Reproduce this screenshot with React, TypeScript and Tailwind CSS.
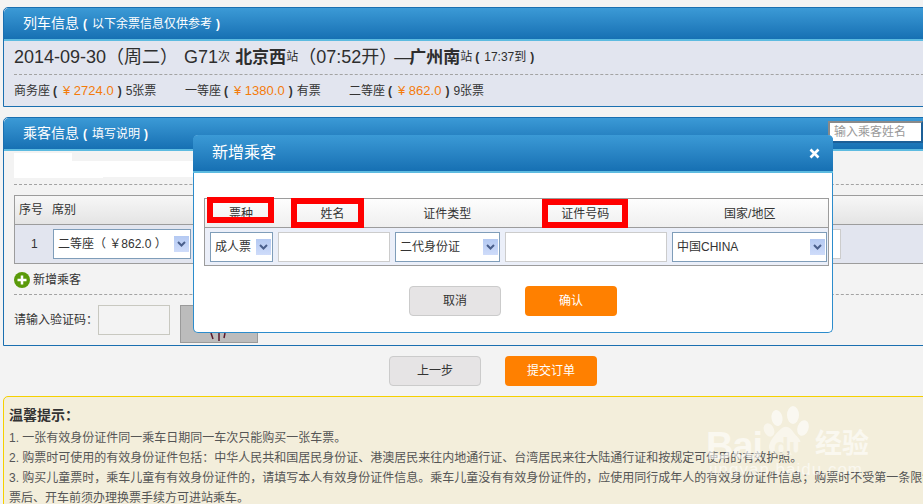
import React from "react"

const font = "[font-family:'Liberation_Sans','Noto_Sans_CJK_SC',sans-serif]"

function PanelHeader({title, note, children}: {title: string; note: string; children?: React.ReactNode}) {
    return (
        <div className="flex h-[33px] shrink-0 justify-between rounded-t-[5px] border-b-2 border-[#5dbbe0] bg-gradient-to-b from-[#3b9ad6] to-[#1670b3] pl-[19px] text-white">
            <div className="flex h-[31px] items-center">
                <span className="text-[14px]">{title}</span>
                <span className="ml-[4px] text-[12px] font-bold">(</span>
                <span className="ml-[5px] text-[12px]">{note}</span>
                <span className="ml-[4px] text-[12px] font-bold">)</span>
            </div>
            {children}
        </div>
    )
}

function Arrow() {
    return (
        <span className="flex h-[16px] w-[15px] items-center justify-center bg-gradient-to-b from-[#b4c9f2] to-[#cfdcfa]">
            <svg width="9" height="6" viewBox="0 0 9 6">
                <path d="M1 1l3.5 3.5L8 1" fill="none" stroke="#4a5f8c" strokeWidth="2"/>
            </svg>
        </span>
    )
}

function FakeSelect({label, width}: {label: string; width: string}) {
    return (
        <div className={`flex h-[30px] ${width} shrink-0 items-center justify-between border border-[#7f9db9] bg-white pl-[4px] pr-[1px] text-[12px] text-[#333]`}>
            <span className="whitespace-nowrap">{label}</span>
            <Arrow/>
        </div>
    )
}

function Dash({className}: {className?: string}) {
    return <div className={`border-t border-dashed border-[#a3a3a3] ${className ?? ""}`}/>
}

function Btn({label, primary}: {label: string; primary?: boolean}) {
    return (
        <button
            className={
                primary
                    ? "h-[30px] w-[92px] rounded-[4px] bg-[#ff8000] text-[12px] text-white"
                    : "h-[30px] w-[92px] rounded-[4px] border border-[#cbcbcb] bg-[#e6e4e5] text-[12px] text-[#333]"
            }
        >
            {label}
        </button>
    )
}

function Ticket({name, price, left, width}: {name: string; price: string; left: string; width: string}) {
    return (
        <span className={`${width} flex shrink-0 items-center whitespace-nowrap`}>
            <span>{name}</span>
            <span className="ml-[3px] font-bold">(</span>
            <span className="ml-[6px] text-[13px] text-[#f47b0b]">¥ {price}</span>
            <span className="ml-[4px] font-bold">)</span>
            <span className="ml-[4px]">{left}</span>
        </span>
    )
}

function RedBox({className}: {className: string}) {
    return <div className={`absolute border-[6px] border-[#ff0000] ${className}`}/>
}

function Watermark() {
    return (
        <div className="pointer-events-none absolute left-[706px] top-[404px] h-[80px] w-[170px] text-white/60">
            <svg className="absolute left-[54px] top-0" width="60" height="56" viewBox="0 0 60 56" fill="currentColor">
                <ellipse cx="17" cy="14" rx="5.5" ry="8" transform="rotate(-10 17 14)"/>
                <ellipse cx="33" cy="11" rx="6" ry="9"/>
                <ellipse cx="9" cy="26" rx="5" ry="7" transform="rotate(-25 9 26)" opacity="0.8"/>
                <ellipse cx="43" cy="24" rx="5.5" ry="8" transform="rotate(20 43 24)"/>
                <path d="M22 24c5-3 9 0 12 5 3 4 7 6 7 12 0 7-6 10-13 10S11 52 9 44c-1-6 8-16 13-20z" opacity="0.8"/>
            </svg>
            <span className="absolute left-0 top-[20px] text-[38px] font-bold leading-[44px] tracking-[-1px]">Bai</span>
            <span className="absolute left-[68px] top-[29px] text-[24px] font-bold leading-[28px] text-[#f3eedb]">du</span>
            <span className="absolute left-[109px] top-[24px] text-[27px] font-bold leading-[32px]">经验</span>
            <span className="absolute left-[3px] top-[56px] whitespace-nowrap text-[17px] leading-[20px] tracking-[1px]">jingyan.baidu.com</span>
        </div>
    )
}

export default function App() {
    return (
        <div className={`${font} relative h-[504px] w-[923px] overflow-hidden bg-[#f3f3f3] text-[#333]`}>
            <div className="flex flex-col pl-[3px] pt-[7px]">
                {/* 列车信息 */}
                <div className="flex h-[100px] w-[930px] flex-col rounded-t-[5px] border border-[#1a6fb0] bg-[#e2e5ef]">
                    <PanelHeader title="列车信息" note="以下余票信息仅供参考"/>
                    <div className="px-[10px]">
                        <div className="flex h-[32px] items-center whitespace-nowrap text-[18px] leading-none text-[#2e2e2e]">
                            <span>2014-09-30（周二）</span>
                            <span className="ml-[6px]">G71</span>
                            <span className="text-[12px]">次</span>
                            <span className="ml-[5px] text-[17px] font-bold">北京西</span>
                            <span className="text-[12px]">站</span>
                            <span>（07:52开）</span>
                            <span className="-ml-[3px]">—</span>
                            <span className="-ml-[3px] text-[17px] font-bold">广州南</span>
                            <span className="text-[12px]">站</span>
                            <span className="ml-[3px] text-[12px] font-bold">(</span>
                            <span className="ml-[5px] text-[12px]">17:37到</span>
                            <span className="ml-[4px] text-[12px] font-bold">)</span>
                        </div>
                        <Dash className="mt-[1px] w-[910px]"/>
                        <div className="mt-[8px] flex text-[12px] leading-[16px]">
                            <Ticket name="商务座" price="2724.0" left="5张票" width="w-[171px]"/>
                            <Ticket name="一等座" price="1380.0" left="有票" width="w-[164px]"/>
                            <Ticket name="二等座" price="862.0" left="9张票" width="w-[160px]"/>
                        </div>
                    </div>
                </div>

                {/* 乘客信息 */}
                <div className="mt-[10px] flex h-[229px] w-[930px] flex-col rounded-t-[5px] border border-[#1a6fb0] bg-[#f3f3f3]">
                    <PanelHeader title="乘客信息" note="填写说明">
                        <div className="mr-[9px] mt-[3px] flex h-[22px] w-[95px] items-center border-2 border-[#1c5f97] border-l-[#8a8a8a] border-t-[#8a8a8a] bg-white pl-[4px] text-[12px] text-[#999]">
                            输入乘客姓名
                        </div>
                    </PanelHeader>
                    <div className="flex flex-col px-[10px]">
                        <div className="mt-[2px] h-[8px] w-[58px] bg-white"/>
                        <div className="h-[16px] w-[183px] bg-white"/>
                        <div className="h-[1px] w-[89px] bg-white"/>
                        <Dash className="mt-[6px] w-[910px]"/>
                        <div className="mt-[10px] w-[916px] border border-[#9c9c9c] border-r-0">
                            <div className="flex h-[28px] items-center gap-[9px] bg-gradient-to-b from-[#f7f7f7] to-[#e4e4e4] pl-[4px] text-[12px]">
                                <span>序号</span>
                                <span>席别</span>
                            </div>
                            <div className="flex h-[39px] items-center border-t border-[#9c9c9c] bg-[#e2e5ef] pl-[16px] text-[12px]">
                                <span className="w-[22px]">1</span>
                                <FakeSelect label="二等座（ ￥862.0 ）" width="w-[138px]"/>
                                <div className="ml-[600px] h-[30px] w-[50px] border border-[#cccccc] bg-white"/>
                            </div>
                        </div>
                        <div className="mt-[7px] flex h-[18px] items-center gap-[3px] text-[12px]">
                            <svg width="16" height="16" viewBox="0 0 16 16">
                                <circle cx="8" cy="8" r="8" fill="#5a9a0a"/>
                                <path d="M8 3.5v9M3.5 8h9" stroke="#fff" strokeWidth="2.5"/>
                            </svg>
                            <span>新增乘客</span>
                        </div>
                        <Dash className="mt-[5px] w-[910px]"/>
                        <div className="mt-[10px] flex items-start text-[12px]">
                            <span className="flex h-[30px] w-[84px] items-center">请输入验证码：</span>
                            <div className="h-[30px] w-[72px] border border-[#c8c8c0] bg-[#f3f3f3]"/>
                            <div className="relative ml-[10px] h-[38px] w-[78px] border border-[#9a9a9a] bg-[#bcbcbc]">
                                <svg className="absolute left-[26px] top-[24px]" width="24" height="12" viewBox="0 0 24 12">
                                    <path d="M4 3l2 6M12 1v10M18 3l-1 5" stroke="#5a1a2e" strokeWidth="1.5" fill="none"/>
                                </svg>
                            </div>
                        </div>
                    </div>
                </div>

                <div className="mt-[10px] flex gap-[24px] pl-[386px]">
                    <Btn label="上一步"/>
                    <Btn label="提交订单" primary/>
                </div>

                {/* 温馨提示 */}
                <div className="mt-[10px] h-[120px] w-[930px] rounded-tl-[5px] border border-[#f5d000] bg-[#f3eedb] pl-[5px] pt-[8px] text-[12px] leading-[20px] text-[#555]">
                    <div className="mb-[3px] text-[14px] font-bold text-[#333]">温馨提示：</div>
                    <div className="whitespace-nowrap">1. 一张有效身份证件同一乘车日期同一车次只能购买一张车票。</div>
                    <div className="whitespace-nowrap">2. 购票时可使用的有效身份证件包括：中华人民共和国居民身份证、港澳居民来往内地通行证、台湾居民来往大陆通行证和按规定可使用的有效护照。</div>
                    <div className="whitespace-nowrap">3. 购买儿童票时，乘车儿童有有效身份证件的，请填写本人有效身份证件信息。乘车儿童没有有效身份证件的，应使用同行成年人的有效身份证件信息；购票时不受第一条限制，</div>
                    <div className="whitespace-nowrap">票后、开车前须办理换票手续方可进站乘车。</div>
                </div>
            </div>

            <Watermark/>

            {/* 新增乘客弹窗 */}
            <div className="absolute left-[193px] top-[135px] flex h-[198px] w-[640px] flex-col rounded-[5px] border-x border-b border-[#2c8ccc] bg-white">
                <div className="-mx-px flex h-[38px] shrink-0 items-center justify-between rounded-t-[5px] border-b-2 border-[#5dbbe0] bg-gradient-to-b from-[#3b9ad6] to-[#1670b3] pl-[19px] pr-[13px] text-white">
                    <span className="text-[16px]">新增乘客</span>
                    <svg width="11" height="11" viewBox="0 0 11 11">
                        <path d="M1.5 1.5l8 8M9.5 1.5l-8 8" stroke="#fff" strokeWidth="2.6"/>
                    </svg>
                </div>
                <div className="relative ml-[10px] mt-[25px] w-[625px] border border-[#9c9c9c]">
                    <div className="flex h-[28px] items-center bg-gradient-to-b from-[#fdfdfd] to-[#efefef] pl-[1px] pt-[2px] text-center text-[12px]">
                        <span className="w-[70px]">票种</span>
                        <span className="w-[117px] pr-[3px]">姓名</span>
                        <span className="w-[110px]">证件类型</span>
                        <span className="w-[167px]">证件号码</span>
                        <span className="w-[160px] pl-[3px]">国家/地区</span>
                    </div>
                    <div className="flex h-[38px] items-center gap-[5px] border-t border-[#9c9c9c] bg-[#ebeff9] pl-[5px]">
                        <FakeSelect label="成人票" width="w-[63px]"/>
                        <div className="h-[30px] w-[112px] shrink-0 border border-[#cccccc] bg-white"/>
                        <FakeSelect label="二代身份证" width="w-[105px]"/>
                        <div className="h-[30px] w-[162px] shrink-0 border border-[#cccccc] bg-white"/>
                        <FakeSelect label="中国CHINA" width="w-[155px]"/>
                    </div>
                    <RedBox className="left-[2px] top-[-2px] h-[26px] w-[67px]"/>
                    <RedBox className="left-[86px] top-[-1px] h-[30px] w-[73px]"/>
                    <RedBox className="left-[337px] top-0 h-[29px] w-[86px]"/>
                </div>
                <div className="ml-[215px] mt-[20px] flex gap-[24px]">
                    <Btn label="取消"/>
                    <Btn label="确认" primary/>
                </div>
            </div>
        </div>
    )
}
